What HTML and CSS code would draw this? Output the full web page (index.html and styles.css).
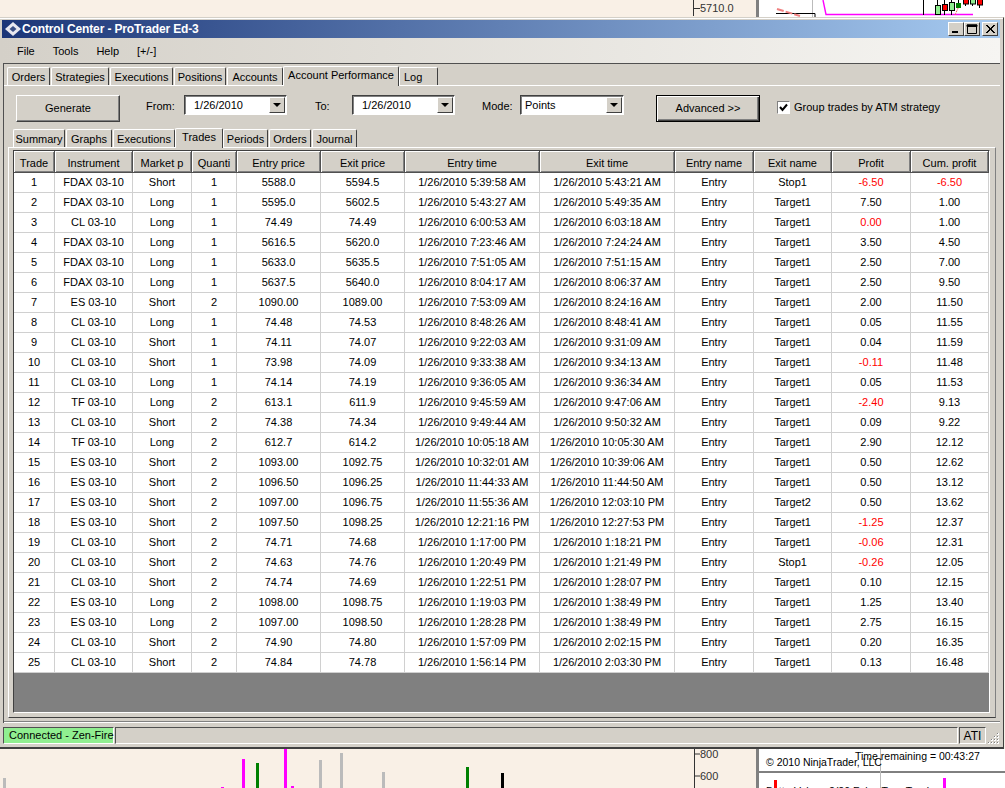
FILE: index.html
```html
<!DOCTYPE html>
<html lang="en">
<head>
<meta charset="utf-8">
<title>Control Center - ProTrader Ed-3</title>
<link rel="stylesheet" href="styles.css">
</head>
<body>
<svg class="backdrop" width="1005" height="788" viewBox="0 0 1005 788">
  <rect x="0" y="0" width="1005" height="788" fill="#f9f0e6"/>
  <rect x="759" y="0" width="246" height="17" fill="#fff"/>
  <rect x="756" y="0" width="3" height="17" fill="#808080"/>
  <path d="M693.5 0V16M693.5 8.5H700" stroke="#333" fill="none"/>
  <text x="700" y="12" class="axis">5710.0</text>
  <path d="M812.5 0V17" stroke="#bbb"/>
  <path d="M776 13.5H815V17" stroke="#000" fill="none"/>
  <path d="M777 9L800 16" stroke="#f08080" stroke-width="2" stroke-dasharray="7 2"/>
  <path d="M823 0L826 14.5H973" stroke="#f0f" stroke-width="1.4" fill="none"/>
  <path d="M923.5 0V15M937.5 0V15M944.5 0V15M951.5 0V15M958.5 0V8M965.5 0V6M972.5 0V6M979.5 0V8" stroke="#000"/>
  <path d="M955 15L959 6" stroke="#f06060" stroke-dasharray="2 1"/>
  <rect x="935.5" y="5.5" width="5" height="9" fill="#90ee90" stroke="#000"/>
  <rect x="942.5" y="4.5" width="5" height="6" fill="#f00" stroke="#000"/>
  <rect x="949.5" y="2.5" width="5" height="8" fill="#90ee90" stroke="#000"/>
  <rect x="956" y="3" width="5" height="5" fill="#008000"/>
  <rect x="963.5" y="-2" width="5" height="6" fill="#f00" stroke="#000"/>
  <rect x="970.5" y="-2" width="5" height="6" fill="#90ee90" stroke="#000"/>
  <rect x="977.5" y="-2" width="5" height="7" fill="#f00" stroke="#000"/>

  <rect x="759" y="749" width="246" height="39" fill="#fff"/>
  <rect x="756" y="749" width="3" height="39" fill="#808080"/>
  <path d="M759 772H1005" stroke="#000"/>
  <path d="M880.5 749V788" stroke="#bbb"/>
  <text x="766" y="766" class="chart-text">© 2010 NinjaTrader, LLC</text>
  <text x="855" y="760" class="chart-text">Time remaining = 00:43:27</text>
  <text x="766" y="795" class="chart-text">BetterVolume2(20,False,True,True)</text>
  <rect x="774" y="780" width="3" height="8" fill="#f00"/>
  <rect x="943" y="778" width="3" height="10" fill="#f0f"/>
  <path d="M694.5 749V788M694.5 754H700M694.5 776H700" stroke="#333" fill="none"/>
  <text x="700" y="758" class="axis">800</text>
  <text x="700" y="780" class="axis">600</text>
  <rect x="3" y="778" width="3" height="10" fill="#bbb"/>
  <rect x="221" y="787" width="3" height="1" fill="#f0f"/>
  <rect x="242" y="759" width="3" height="29" fill="#f0f"/>
  <rect x="256" y="763" width="3" height="25" fill="#008000"/>
  <rect x="284" y="749" width="3" height="39" fill="#f0f"/>
  <rect x="291" y="786" width="3" height="2" fill="#f0f"/>
  <rect x="319" y="760" width="3" height="28" fill="#bbb"/>
  <rect x="340" y="753" width="3" height="35" fill="#bbb"/>
  <rect x="382" y="772" width="3" height="16" fill="#bbb"/>
  <rect x="466" y="767" width="3" height="21" fill="#008000"/>
  <rect x="501" y="773" width="3" height="15" fill="#000"/>
</svg>

<div class="window">
  <div class="titlebar">
    <svg class="app-icon" width="16" height="14" viewBox="0 0 16 14">
      <path d="M8 0L16 7L8 14L0 7Z" fill="#e8e8f0"/>
      <path d="M8 4L11.5 7L8 10L4.5 7Z" fill="#3a4f86"/>
    </svg>
    <span class="title-text">Control Center - ProTrader Ed-3</span>
    <div class="win-buttons">
      <span class="win-btn"><svg width="14" height="12" viewBox="0 0 14 12"><rect x="3" y="8" width="6" height="2" fill="#000"/></svg></span>
      <span class="win-btn"><svg width="14" height="12" viewBox="0 0 14 12"><path d="M2.5 2.5H11.5V10.5H2.5Z M2 2H12V3.5H2Z" fill="none" stroke="#000"/><rect x="2" y="1.5" width="10" height="2" fill="#000"/></svg></span>
      <span class="win-btn win-close"><svg width="14" height="12" viewBox="0 0 14 12"><path d="M3 2L11 10M4 2L12 10M11 2L3 10M12 2L4 10" stroke="#000" fill="none"/></svg></span>
    </div>
  </div>

  <nav class="menu">
    <span class="menu-item">File</span>
    <span class="menu-item">Tools</span>
    <span class="menu-item">Help</span>
    <span class="menu-item">[+/-]</span>
  </nav>

  <div class="main-frame">
    <div class="tabs tabs-main">
      <span class="tab tm-orders">Orders</span>
      <span class="tab tm-strategies">Strategies</span>
      <span class="tab tm-executions">Executions</span>
      <span class="tab tm-positions">Positions</span>
      <span class="tab tm-accounts">Accounts</span>
      <span class="tab tab-active tm-perf">Account Performance</span>
      <span class="tab tm-log">Log</span>
    </div>

    <div class="page-outer">
      <div class="toolbar">
        <button class="btn btn-generate">Generate</button>
        <label class="field-label label-from">From:</label>
        <div class="combo combo-date"><span class="combo-value">1/26/2010</span><span class="combo-arrow"></span></div>
        <label class="field-label label-to">To:</label>
        <div class="combo combo-date"><span class="combo-value">1/26/2010</span><span class="combo-arrow"></span></div>
        <label class="field-label label-mode">Mode:</label>
        <div class="combo combo-mode"><span class="combo-value">Points</span><span class="combo-arrow"></span></div>
        <button class="btn btn-advanced">Advanced &gt;&gt;</button>
        <span class="checkbox"><svg width="9" height="9" viewBox="0 0 9 9"><path d="M1 4L3.5 7L8 1.5" fill="none" stroke="#000" stroke-width="2"/></svg></span>
        <span class="check-label">Group trades by ATM strategy</span>
      </div>

      <div class="tabs tabs-inner">
        <span class="tab ti-summary">Summary</span>
        <span class="tab ti-graphs">Graphs</span>
        <span class="tab ti-executions">Executions</span>
        <span class="tab tab-active ti-trades">Trades</span>
        <span class="tab ti-periods">Periods</span>
        <span class="tab ti-orders">Orders</span>
        <span class="tab ti-journal">Journal</span>
      </div>

      <div class="page-inner">
        <div class="grid">
          <table class="trades">
            <colgroup>
              <col class="c-trade"><col class="c-inst"><col class="c-market"><col class="c-qty"><col class="c-price"><col class="c-price"><col class="c-time"><col class="c-time"><col class="c-name1"><col class="c-name2"><col class="c-profit"><col class="c-cum">
            </colgroup>
            <thead>
              <tr><th>Trade</th><th>Instrument</th><th>Market p</th><th>Quanti</th><th>Entry price</th><th>Exit price</th><th>Entry time</th><th>Exit time</th><th>Entry name</th><th>Exit name</th><th>Profit</th><th>Cum. profit</th></tr>
            </thead>
            <tbody>
              <tr><td>1</td><td>FDAX 03-10</td><td>Short</td><td>1</td><td>5588.0</td><td>5594.5</td><td>1/26/2010 5:39:58 AM</td><td>1/26/2010 5:43:21 AM</td><td>Entry</td><td>Stop1</td><td class="neg">-6.50</td><td class="neg">-6.50</td></tr>
              <tr><td>2</td><td>FDAX 03-10</td><td>Long</td><td>1</td><td>5595.0</td><td>5602.5</td><td>1/26/2010 5:43:27 AM</td><td>1/26/2010 5:49:35 AM</td><td>Entry</td><td>Target1</td><td>7.50</td><td>1.00</td></tr>
              <tr><td>3</td><td>CL 03-10</td><td>Long</td><td>1</td><td>74.49</td><td>74.49</td><td>1/26/2010 6:00:53 AM</td><td>1/26/2010 6:03:18 AM</td><td>Entry</td><td>Target1</td><td class="neg">0.00</td><td>1.00</td></tr>
              <tr><td>4</td><td>FDAX 03-10</td><td>Long</td><td>1</td><td>5616.5</td><td>5620.0</td><td>1/26/2010 7:23:46 AM</td><td>1/26/2010 7:24:24 AM</td><td>Entry</td><td>Target1</td><td>3.50</td><td>4.50</td></tr>
              <tr><td>5</td><td>FDAX 03-10</td><td>Long</td><td>1</td><td>5633.0</td><td>5635.5</td><td>1/26/2010 7:51:05 AM</td><td>1/26/2010 7:51:15 AM</td><td>Entry</td><td>Target1</td><td>2.50</td><td>7.00</td></tr>
              <tr><td>6</td><td>FDAX 03-10</td><td>Long</td><td>1</td><td>5637.5</td><td>5640.0</td><td>1/26/2010 8:04:17 AM</td><td>1/26/2010 8:06:37 AM</td><td>Entry</td><td>Target1</td><td>2.50</td><td>9.50</td></tr>
              <tr><td>7</td><td>ES 03-10</td><td>Short</td><td>2</td><td>1090.00</td><td>1089.00</td><td>1/26/2010 7:53:09 AM</td><td>1/26/2010 8:24:16 AM</td><td>Entry</td><td>Target1</td><td>2.00</td><td>11.50</td></tr>
              <tr><td>8</td><td>CL 03-10</td><td>Long</td><td>1</td><td>74.48</td><td>74.53</td><td>1/26/2010 8:48:26 AM</td><td>1/26/2010 8:48:41 AM</td><td>Entry</td><td>Target1</td><td>0.05</td><td>11.55</td></tr>
              <tr><td>9</td><td>CL 03-10</td><td>Short</td><td>1</td><td>74.11</td><td>74.07</td><td>1/26/2010 9:22:03 AM</td><td>1/26/2010 9:31:09 AM</td><td>Entry</td><td>Target1</td><td>0.04</td><td>11.59</td></tr>
              <tr><td>10</td><td>CL 03-10</td><td>Short</td><td>1</td><td>73.98</td><td>74.09</td><td>1/26/2010 9:33:38 AM</td><td>1/26/2010 9:34:13 AM</td><td>Entry</td><td>Target1</td><td class="neg">-0.11</td><td>11.48</td></tr>
              <tr><td>11</td><td>CL 03-10</td><td>Long</td><td>1</td><td>74.14</td><td>74.19</td><td>1/26/2010 9:36:05 AM</td><td>1/26/2010 9:36:34 AM</td><td>Entry</td><td>Target1</td><td>0.05</td><td>11.53</td></tr>
              <tr><td>12</td><td>TF 03-10</td><td>Long</td><td>2</td><td>613.1</td><td>611.9</td><td>1/26/2010 9:45:59 AM</td><td>1/26/2010 9:47:06 AM</td><td>Entry</td><td>Target1</td><td class="neg">-2.40</td><td>9.13</td></tr>
              <tr><td>13</td><td>CL 03-10</td><td>Short</td><td>2</td><td>74.38</td><td>74.34</td><td>1/26/2010 9:49:44 AM</td><td>1/26/2010 9:50:32 AM</td><td>Entry</td><td>Target1</td><td>0.09</td><td>9.22</td></tr>
              <tr><td>14</td><td>TF 03-10</td><td>Long</td><td>2</td><td>612.7</td><td>614.2</td><td>1/26/2010 10:05:18 AM</td><td>1/26/2010 10:05:30 AM</td><td>Entry</td><td>Target1</td><td>2.90</td><td>12.12</td></tr>
              <tr><td>15</td><td>ES 03-10</td><td>Short</td><td>2</td><td>1093.00</td><td>1092.75</td><td>1/26/2010 10:32:01 AM</td><td>1/26/2010 10:39:06 AM</td><td>Entry</td><td>Target1</td><td>0.50</td><td>12.62</td></tr>
              <tr><td>16</td><td>ES 03-10</td><td>Short</td><td>2</td><td>1096.50</td><td>1096.25</td><td>1/26/2010 11:44:33 AM</td><td>1/26/2010 11:44:50 AM</td><td>Entry</td><td>Target1</td><td>0.50</td><td>13.12</td></tr>
              <tr><td>17</td><td>ES 03-10</td><td>Short</td><td>2</td><td>1097.00</td><td>1096.75</td><td>1/26/2010 11:55:36 AM</td><td>1/26/2010 12:03:10 PM</td><td>Entry</td><td>Target2</td><td>0.50</td><td>13.62</td></tr>
              <tr><td>18</td><td>ES 03-10</td><td>Short</td><td>2</td><td>1097.50</td><td>1098.25</td><td>1/26/2010 12:21:16 PM</td><td>1/26/2010 12:27:53 PM</td><td>Entry</td><td>Target1</td><td class="neg">-1.25</td><td>12.37</td></tr>
              <tr><td>19</td><td>CL 03-10</td><td>Short</td><td>2</td><td>74.71</td><td>74.68</td><td>1/26/2010 1:17:00 PM</td><td>1/26/2010 1:18:21 PM</td><td>Entry</td><td>Target1</td><td class="neg">-0.06</td><td>12.31</td></tr>
              <tr><td>20</td><td>CL 03-10</td><td>Short</td><td>2</td><td>74.63</td><td>74.76</td><td>1/26/2010 1:20:49 PM</td><td>1/26/2010 1:21:49 PM</td><td>Entry</td><td>Stop1</td><td class="neg">-0.26</td><td>12.05</td></tr>
              <tr><td>21</td><td>CL 03-10</td><td>Short</td><td>2</td><td>74.74</td><td>74.69</td><td>1/26/2010 1:22:51 PM</td><td>1/26/2010 1:28:07 PM</td><td>Entry</td><td>Target1</td><td>0.10</td><td>12.15</td></tr>
              <tr><td>22</td><td>ES 03-10</td><td>Long</td><td>2</td><td>1098.00</td><td>1098.75</td><td>1/26/2010 1:19:03 PM</td><td>1/26/2010 1:38:49 PM</td><td>Entry</td><td>Target1</td><td>1.25</td><td>13.40</td></tr>
              <tr><td>23</td><td>ES 03-10</td><td>Long</td><td>2</td><td>1097.00</td><td>1098.50</td><td>1/26/2010 1:28:28 PM</td><td>1/26/2010 1:38:49 PM</td><td>Entry</td><td>Target1</td><td>2.75</td><td>16.15</td></tr>
              <tr><td>24</td><td>CL 03-10</td><td>Short</td><td>2</td><td>74.90</td><td>74.80</td><td>1/26/2010 1:57:09 PM</td><td>1/26/2010 2:02:15 PM</td><td>Entry</td><td>Target1</td><td>0.20</td><td>16.35</td></tr>
              <tr><td>25</td><td>CL 03-10</td><td>Short</td><td>2</td><td>74.84</td><td>74.78</td><td>1/26/2010 1:56:14 PM</td><td>1/26/2010 2:03:30 PM</td><td>Entry</td><td>Target1</td><td>0.13</td><td>16.48</td></tr>
            </tbody>
          </table>
        </div>
      </div>
    </div>
  </div>

  <footer class="statusbar">
    <span class="status-cell status-conn">Connected - Zen-Fire</span>
    <span class="status-cell status-mid"></span>
    <span class="status-cell status-ati">ATI</span>
    <svg class="grip" width="12" height="12" viewBox="0 0 12 12">
      <path d="M9 1h2v2H9zM6 4h2v2H6zM9 4h2v2H9zM3 7h2v2H3zM6 7h2v2H6zM9 7h2v2H9zM0 10h2v2H0zM3 10h2v2H3zM6 10h2v2H6zM9 10h2v2H9z" fill="#fff"/>
      <path d="M9 1h1v1H9zM6 4h1v1H6zM9 4h1v1H9zM3 7h1v1H3zM6 7h1v1H6zM9 7h1v1H9zM0 10h1v1H0zM3 10h1v1H3zM6 10h1v1H6zM9 10h1v1H9z" fill="#808080"/>
    </svg>
  </footer>
</div>
</body>
</html>
```

FILE: styles.css
```css
* { box-sizing: border-box; }
html, body { margin: 0; padding: 0; }
body {
  width: 1005px;
  height: 788px;
  overflow: hidden;
  position: relative;
  background: #f9f0e6;
  font: 11px/1 "Liberation Sans", Arial, sans-serif;
  color: #000;
}
.backdrop { position: absolute; left: 0; top: 0; display: block; }
.axis { font: 11px "Liberation Sans", Arial, sans-serif; fill: #333; }
.chart-text { font: 10.5px "Liberation Sans", Arial, sans-serif; fill: #000; }

.window {
  position: absolute;
  left: 0;
  top: 17px;
  width: 1004px;
  height: 732px;
  display: flex;
  flex-direction: column;
  background: #d4d0c8;
  padding: 3px 3px 0 2px;
  border-bottom: 2px solid #404040;
  border-right: 1px solid #404040;
  border-top: 1px solid #d4d0c8;
  box-shadow: inset 0 1px 0 #fff;
}
.titlebar {
  height: 18px;
  flex: none;
  margin-top: -1px;
  display: flex;
  align-items: center;
  padding: 0 2px 0 3px;
  background: linear-gradient(90deg, #1c3678 0%, #a6caf0 100%);
}
.app-icon { flex: none; margin-right: 1px; }
.title-text { color: #fff; font-weight: 700; font-size: 12px; letter-spacing: -0.13px; }
.win-buttons { margin-left: auto; display: flex; }
.win-btn {
  width: 16px;
  height: 14px;
  display: flex;
  align-items: center;
  justify-content: center;
  background: #d4d0c8;
  border: 1px solid;
  border-color: #fff #404040 #404040 #fff;
}
.win-close { margin-left: 2px; }

.menu {
  height: 25px;
  flex: none;
  display: flex;
  align-items: center;
  padding: 2px 0 0 15px;
  gap: 18px;
  background: linear-gradient(90deg, #d4d0c8 0%, #f6f5f2 100%);
}
.menu-item { font-size: 11px; }

.main-frame {
  flex: none;
  height: 660px;
  margin-left: 1px;
  border-top: 1px solid #505050;
  border-left: 1px solid #505050;
  display: flex;
  flex-direction: column;
}
.tabs { display: flex; align-items: flex-end; flex: none; position: relative; z-index: 1; }
.tabs-main { height: 21px; padding-left: 3px; gap: 1px; }
.tabs-inner { height: 20px; padding-left: 5px; gap: 1px; }
.tab {
  height: 18px;
  display: flex;
  align-items: center;
  justify-content: center;
  padding-top: 2px;
  background: #d4d0c8;
  border: 1px solid;
  border-color: #fff #404040 transparent #fff;
  border-bottom: 0;
  border-radius: 2px 2px 0 0;
}
.tab-active { height: 20px; padding: 0 0 3px; margin-bottom: -1px; }
.tm-orders { width: 43px; }
.tm-strategies { width: 58px; }
.tm-executions { width: 63px; }
.tm-positions { width: 52px; }
.tm-accounts { width: 56px; }
.tm-perf { width: 116px; margin-left: -1px; }
.tm-log { width: 39px; justify-content: flex-start; padding-left: 4px; margin-left: -1px; }
.ti-summary { width: 52px; }
.ti-graphs { width: 46px; }
.ti-executions { width: 62px; }
.ti-trades { width: 48px; margin-left: -1px; }
.ti-periods { width: 45px; margin-left: -1px; }
.ti-orders { width: 42px; }
.ti-journal { width: 45px; }

.page-outer {
  flex: 1;
  min-height: 0;
  border-top: 1px solid #fff;
  display: flex;
  flex-direction: column;
  padding: 0 4px 5px 4px;
  border-bottom: 1px solid #fff;
  box-shadow: inset 0 -1px 0 #808080;
}
.toolbar {
  height: 41px;
  flex: none;
  display: flex;
  align-items: flex-start;
  padding: 9px 0 0 8px;
}
.btn {
  font: inherit;
  color: #000;
  width: 104px;
  height: 27px;
  padding: 0;
  background: #d4d0c8;
  border: 1px solid;
  border-color: #fff #404040 #404040 #fff;
  box-shadow: inset -1px -1px 0 #808080;
}
.btn-advanced {
  border: 1px solid #000;
  box-shadow: inset 1px 1px 0 #fff, inset -1px -1px 0 #404040, inset -2px -2px 0 #808080;
  margin-left: 32px;
}
.field-label { line-height: 23px; }
.label-from { margin-left: 26px; width: 38px; }
.label-to { margin-left: 28px; width: 37px; }
.label-mode { margin-left: 27px; width: 38px; }
.combo {
  height: 20px;
  display: flex;
  align-items: center;
  background: #fff;
  border: 1px solid;
  border-color: #404040 #fff #fff #404040;
  box-shadow: inset 1px 1px 0 #808080;
  padding-right: 1px;
}
.combo-date { width: 103px; }
.combo-mode { width: 104px; }
.combo-value { flex: 1; padding-left: 9px; }
.combo-mode .combo-value { padding-left: 4px; }
.combo-arrow {
  width: 16px;
  height: 16px;
  flex: none;
  position: relative;
  background: #d4d0c8;
  border: 1px solid;
  border-color: #fff #404040 #404040 #fff;
}
.combo-arrow::after {
  content: "";
  position: absolute;
  left: 3px;
  top: 5px;
  border: 4px solid transparent;
  border-top: 4px solid #000;
  border-bottom: 0;
}
.checkbox {
  width: 13px;
  height: 13px;
  margin: 6px 0 0 17px;
  display: flex;
  align-items: center;
  justify-content: center;
  background: #fff;
  border: 1px solid;
  border-color: #808080 #fff #fff #808080;
  flex: none;
}
.check-label { margin-left: 4px; line-height: 25px; }

.page-inner {
  flex: 1;
  min-height: 0;
  border-top: 1px solid #fff;
  border-left: 1px solid #fff;
  background: #d4d0c8;
  padding: 2px 5px 4px 4px;
  margin-bottom: -1px;
  border-right: 1px solid #808080;
  border-bottom: 1px solid #404040;
  display: flex;
}
.grid {
  flex: 1;
  background: #808080;
  border: 1px solid;
  border-color: #404040 #fff #fff #404040;
  overflow: hidden;
}
.trades {
  border-collapse: separate;
  border-spacing: 0;
  table-layout: fixed;
  width: 975px;
}
.c-trade { width: 41px; }
.c-inst { width: 78px; }
.c-market { width: 59px; }
.c-qty { width: 45px; }
.c-price { width: 84px; }
.c-time { width: 135px; }
.c-name1 { width: 79px; }
.c-name2 { width: 78px; }
.c-profit { width: 79px; }
.c-cum { width: 78px; }
.trades th {
  height: 22px;
  padding: 4px 0 0;
  font-weight: 400;
  text-align: center;
  background: #d4d0c8;
  border-right: 1px solid #505050;
  border-bottom: 1px solid #505050;
  box-shadow: inset 1px 1px 0 #fff, inset -1px -1px 0 #808080;
  white-space: nowrap;
  overflow: hidden;
}
.trades td {
  height: 20px;
  padding: 0;
  text-align: center;
  background: #fff;
  border-right: 1px solid #d0d0d0;
  border-bottom: 1px solid #d0d0d0;
  white-space: nowrap;
  overflow: hidden;
}
.trades td.neg { color: #f00; }

.statusbar {
  flex: 1;
  min-height: 0;
  display: flex;
  align-items: flex-start;
  padding: 4px 0 0 1px;
  gap: 1px;
}
.status-cell {
  height: 17px;
  display: flex;
  align-items: center;
  white-space: nowrap;
  border: 1px solid;
  border-color: #505050 #fff #fff #505050;
}
.status-conn { width: 111px; background: #90ee90; padding-left: 5px; font-size: 11px; }
.status-mid { flex: 1; }
.status-ati { width: 27px; justify-content: center; font-size: 12px; }
.grip { flex: none; align-self: flex-end; margin: 0 0 3px 1px; }
```
